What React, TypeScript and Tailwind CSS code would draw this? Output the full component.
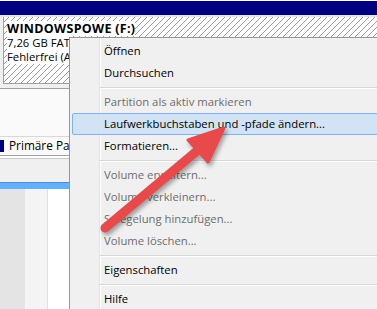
import React from "react";

type Item = { label: string; disabled?: boolean; active?: boolean } | "sep";

const items: Item[] = [
  { label: "Öffnen" },
  { label: "Durchsuchen" },
  "sep",
  { label: "Partition als aktiv markieren", disabled: true },
  { label: "Laufwerkbuchstaben und -pfade ändern...", active: true },
  { label: "Formatieren..." },
  "sep",
  { label: "Volume erweitern...", disabled: true },
  { label: "Volume verkleinern...", disabled: true },
  { label: "Spiegelung hinzufügen...", disabled: true },
  { label: "Volume löschen...", disabled: true },
  "sep",
  { label: "Eigenschaften" },
  "sep",
  { label: "Hilfe" },
];

function ContextMenu() {
  return (
    <div className="absolute left-[69px] top-[37px] w-[312px] h-[290px] border border-[#979797] p-[2px] text-[11.3px] bg-[linear-gradient(to_right,#f0f0f0_29px,#e2e3e3_29px,#e2e3e3_30px,#ffffff_30px,#ffffff_31px,#f0f0f0_31px)] flex flex-col">
      {items.map((it, i) =>
        it === "sep" ? (
          <div key={i} className="h-[7px] pl-[28px] pt-[3px]">
            <div className="h-[1px] bg-[#d7d7d7]" />
            <div className="h-[1px] bg-white" />
          </div>
        ) : (
          <div
            key={i}
            className={
              it.active
                ? "h-[22px] flex items-center pl-[31px] border border-[#7eb4ea] rounded-[2px] bg-[#d1e3f4] text-black"
                : it.disabled
                ? "h-[22px] flex items-center pl-[32px] text-[#6d6d6d]"
                : "h-[22px] flex items-center pl-[32px] text-black"
            }
          >
            {it.label}
          </div>
        )
      )}
    </div>
  );
}

function Arrow() {
  return (
    <svg
      className="absolute left-0 top-0 drop-shadow-[2px_3px_2px_rgba(0,0,0,0.35)]"
      width="377"
      height="309"
      viewBox="0 0 377 309"
    >
      <line x1="105" y1="228" x2="198" y2="150" stroke="#e8494b" strokeWidth="9" strokeLinecap="round" />
      <polygon
        points="224,128 188,140 208,162"
        fill="#e8494b"
        stroke="#e8494b"
        strokeWidth="3"
        strokeLinejoin="round"
      />
    </svg>
  );
}

export default function App() {
  return (
    <div className="relative w-[377px] h-[309px] overflow-hidden bg-[#f0f0f0] text-[11.3px] font-['Open_Sans',sans-serif]">
      {/* title bar */}
      <div className="h-[1px] bg-white" />
      <div className="h-[14px] bg-[#000080]" />
      <div className="h-[2px] bg-[#e4e4e4]" />

      {/* partition box */}
      <div className="pl-[3px] bg-[#f0f0f0]">
        <div className="h-[67px] border-l border-b border-[#a0a0a0] bg-[repeating-linear-gradient(135deg,#ffffff_0_3.2px,#9a9a9a_3.2px_4.24px)] pl-[3px] pt-[4px] flex flex-col items-start">
          <span className="bg-white font-bold text-black text-[12.5px] tracking-[0.3px] leading-[15px]">WINDOWSPOWE (F:)</span>
          <span className="bg-white text-black leading-[14px] max-w-[62px] overflow-hidden whitespace-nowrap">7,26 GB FAT32</span>
          <span className="bg-white text-black leading-[14px] max-w-[62px] overflow-hidden whitespace-nowrap">Fehlerfrei (Aktiv, Primäre Partition)</span>
        </div>
      </div>

      {/* lower left area */}
      <div className="w-[69px] flex flex-col">
        <div className="h-[4px] bg-[#f0f0f0]" />
        <div className="h-[1px] bg-[#a0a0a0]" />
        <div className="h-[47px] bg-[#fafafa]" />
        <div className="h-[1px] bg-[#d8d8d8]" />
        <div className="h-[18px] bg-[#fafafa] flex items-center gap-[5px] whitespace-nowrap overflow-hidden">
          <div className="w-[4px] h-[12px] shrink-0 bg-[#000080] border-r border-black" />
          <span className="text-black text-[11.8px]">Primäre Par</span>
        </div>
        <div className="h-[1px] bg-[#a0a0a0]" />
        <div className="h-[2px] bg-white" />
        <div className="h-[1px] bg-[#c8c8c8]" />
        <div className="h-[23px] bg-[#f0f0f0]" />
        <div className="h-[1px] bg-[#4a8fd3]" />
        <div className="h-[6px] bg-[#63b1f8]" />
        <div className="h-[120px] flex">
          <div className="w-[25px] bg-[#e4e4e4]" />
          <div className="w-[22px] bg-[#f4f4f4]" />
          <div className="w-[1px] bg-[#e0e0e0]" />
          <div className="flex-1 bg-white" />
        </div>
      </div>

      <ContextMenu />
      <Arrow />
    </div>
  );
}
